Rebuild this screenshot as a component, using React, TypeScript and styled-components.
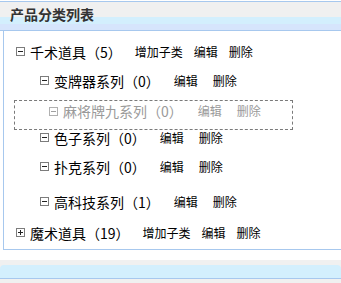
import React from "react";
import styled, { createGlobalStyle } from "styled-components";

const Global = createGlobalStyle`
  html, body { margin: 0; padding: 0; background: #fff; }
  body {
    width: 341px;
    height: 283px;
    overflow: hidden;
    font-family: "Noto Sans CJK SC", "Noto Sans", sans-serif;
    color: #000;
  }
`;

const Page = styled.div`
  padding-top: 1px;
`;

const Header = styled.div`
  height: 28px;
  border-top: 1px solid #a7c8ee;
  border-bottom: 1px solid #a7c8ee;
  background: linear-gradient(
    #f0f0f0 0,
    #f0f0f0 15px,
    #d3effd 15px,
    #d3effd 22px,
    #d6e5fc 22px
  );
  padding: 5px 0 0 10px;
  box-sizing: content-box;
  height: 23px;
`;

const Title = styled.div`
  font-size: 14px;
  line-height: 14px;
  font-weight: bold;
  color: #333;
`;

const Body = styled.div`
  position: relative;
  margin-left: 3px;
  height: 219px;
  box-sizing: border-box;
  border-left: 1px solid #a7c8ee;
  border-bottom: 1px solid #a7c8ee;
  padding-top: 6px;
`;

const Row = styled.div<{ $level: number; $mt?: number; $faded?: boolean }>`
  display: flex;
  align-items: center;
  height: ${(p) => (p.$faded ? 18 : 29)}px;
  margin-top: ${(p) => p.$mt ?? 0}px;
  padding-left: ${(p) => (p.$faded ? 34 : p.$level === 0 ? 12 : 36)}px;
  color: ${(p) => (p.$faded ? "#9a9a9a" : "#000")};
`;

const Name = styled.span<{ $space: number }>`
  margin-left: 5px;
  margin-right: ${(p) => p.$space}px;
  font-size: 14px;
  line-height: 14px;
  white-space: nowrap;
`;

const Actions = styled.span<{ $gap: number }>`
  display: flex;
  gap: ${(p) => p.$gap}px;
  font-size: 12px;
  line-height: 12px;
  white-space: nowrap;
`;

const Action = styled.span`
  cursor: pointer;
`;

const Slot = styled.div`
  height: 28px;
`;

const DragProxy = styled.div`
  position: absolute;
  top: 69px;
  left: 10px;
  width: 279px;
  height: 30px;
  box-sizing: border-box;
  border: 1px dashed #7a7a7a;
  padding-top: 1px;
`;

const Footer = styled.div`
  margin-top: 10px;
  background: #f0f0f0;
  padding: 5px 0;
`;

const FooterBand = styled.div`
  height: 13px;
  background: #d3effd;
  border-bottom: 1px solid #a7c8ee;
  border-radius: 4px 4px 0 0;
`;

const Toggle = ({ open, faded }: { open: boolean; faded?: boolean }) => (
  <svg width="9" height="9" viewBox="0 0 9 9" style={{ flex: "none" }}>
    <rect
      x="0.5"
      y="0.5"
      width="8"
      height="8"
      fill="#fff"
      stroke={faded ? "#b0b0b0" : "#7c7c7c"}
    />
    <path d="M2 4.5h5" stroke={faded ? "#a0a0a0" : "#222"} />
    {!open && <path d="M4.5 2v5" stroke={faded ? "#a0a0a0" : "#222"} />}
  </svg>
);

type Node = {
  name: string;
  level: number;
  open: boolean;
  mt?: number;
};

const TreeRow = ({ node, faded }: { node: Node; faded?: boolean }) => {
  const top = node.level === 0;
  return (
    <Row $level={node.level} $mt={node.mt} $faded={faded}>
      <Toggle open={node.open} faded={faded} />
      <Name $space={faded ? 15 : top ? 13 : 14}>{node.name}</Name>
      <Actions $gap={top ? 11 : 15}>
        {top && <Action>增加子类</Action>}
        <Action>编辑</Action>
        <Action>删除</Action>
      </Actions>
    </Row>
  );
};

export default function App() {
  return (
    <>
      <Global />
      <Page>
        <Header>
          <Title>产品分类列表</Title>
        </Header>
        <Body>
          <TreeRow node={{ name: "千术道具（5）", level: 0, open: true }} />
          <TreeRow node={{ name: "变牌器系列（0）", level: 1, open: true }} />
          <Slot />
          <TreeRow node={{ name: "色子系列（0）", level: 1, open: true }} />
          <TreeRow node={{ name: "扑克系列（0）", level: 1, open: true }} />
          <TreeRow
            node={{ name: "高科技系列（1）", level: 1, open: true, mt: 6 }}
          />
          <TreeRow
            node={{ name: "魔术道具（19）", level: 0, open: false, mt: 2 }}
          />
          <DragProxy>
            <TreeRow
              faded
              node={{ name: "麻将牌九系列（0）", level: 1, open: true }}
            />
          </DragProxy>
        </Body>
        <Footer>
          <FooterBand />
        </Footer>
      </Page>
    </>
  );
}
